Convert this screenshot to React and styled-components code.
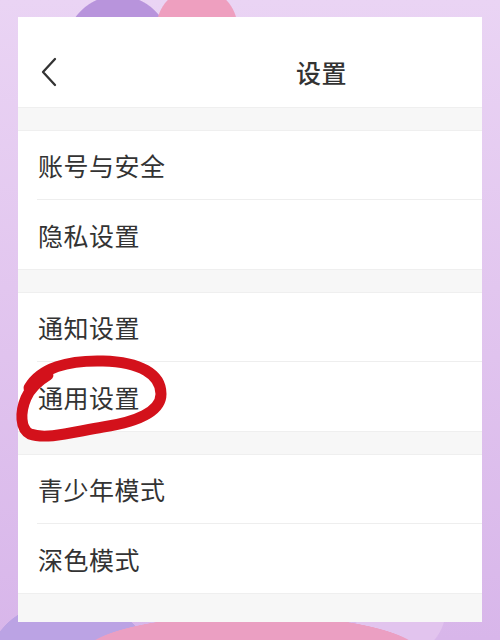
import React from 'react'
import styled, { createGlobalStyle } from 'styled-components'

const GlobalStyle = createGlobalStyle`
	html, body {
		margin: 0;
		padding: 0;
	}
	body {
		font-family: "Noto Sans CJK SC", "Noto Sans", sans-serif;
		background: #e9d2f2;
	}
`

const groups = [
	['账号与安全', '隐私设置'],
	['通知设置', '通用设置'],
	['青少年模式', '深色模式']
]

const App = () => (
	<Page>
		<GlobalStyle />
		<Card>
			<Header>
				<Back aria-label="返回">
					<svg width="18" height="30" viewBox="0 0 18 30">
						<path d="M15 2 L3 15 L15 28" fill="none" stroke="#333" strokeWidth="2.3" strokeLinecap="round" strokeLinejoin="round" />
					</svg>
				</Back>
				<Title>设置</Title>
			</Header>
			<Gap />
			{ groups.map((items, gi) => (
				<React.Fragment key={gi}>
					<Group>
						{ items.map((label, i) => (
							<Row key={label} last={i === items.length - 1}>
								<Label>{ label }</Label>
								{ label === '通用设置' && <Circle /> }
							</Row>
						))}
					</Group>
					<Gap last={gi === groups.length - 1} />
				</React.Fragment>
			))}
		</Card>
	</Page>
)

// hand-drawn red loop round the item
const Circle = () => (
	<Mark width="170" height="110" viewBox="0 0 170 110">
		<path
			d="M11 36 C 22 16, 50 8, 85 9 C 122 10, 143 22, 143 42 C 143 60, 118 70, 85 75 C 55 80, 28 88, 12 82 C 2 77, 2 60, 8 46 C 12 37, 20 29, 30 23"
			fill="none"
			stroke="#d3111b"
			strokeWidth="11"
			strokeLinecap="round"
			strokeLinejoin="round"
		/>
	</Mark>
)

const Page = styled.div`
	position: relative;
	width: 500px;
	height: 640px;
	overflow: hidden;
	padding: 17px 18px 0;
	box-sizing: border-box;
	background:
		radial-gradient(circle at 197px 28px, #ee9fbf 0 40px, transparent 41px),
		radial-gradient(circle at 118px 48px, #b894dc 0 52px, transparent 53px),
		radial-gradient(ellipse 170px 40px at 252px 655px, #eb9fc2 0 99%, transparent 100%),
		radial-gradient(circle at 400px 610px, #e2c4ee 0 45px, transparent 46px),
		radial-gradient(ellipse 80px 60px at 70px 660px, #bba3e4 0 99%, transparent 100%),
		linear-gradient(180deg, #ead4f4 0%, #e2c6ef 45%, #d8b6ea 100%);
`
const Card = styled.div`
	width: 464px;
	height: 605px;
	background: #fff;
	display: flex;
	flex-direction: column;
`
const Header = styled.div`
	height: 90px;
	display: flex;
	align-items: center;
	padding: 20px 0 0 22px;
	box-sizing: border-box;
`
const Back = styled.div`
	display: flex;
	align-items: center;
`
const Title = styled.div`
	margin-left: 238px;
	font-size: 25px;
	color: #333;
	font-weight: 500;
	letter-spacing: 0.5px;
`
const Gap = styled.div`
	height: ${p => (p.last ? '26px' : '24px')};
	background: #f7f7f7;
	border-top: 1px solid #efefef;
	border-bottom: ${p => (p.last ? 'none' : '1px solid #efefef')};
	box-sizing: border-box;
	flex: ${p => (p.last ? '1' : 'none')};
`
const Group = styled.div`
	display: flex;
	flex-direction: column;
`
const Row = styled.div`
	position: relative;
	height: 69px;
	margin-left: 19px;
	display: flex;
	align-items: center;
	border-bottom: ${p => (p.last ? 'none' : '1px solid #eeeeee')};
	box-sizing: border-box;
`
const Label = styled.span`
	font-size: 25px;
	color: #333;
	letter-spacing: 0.5px;
	padding-left: 1px;
`
const Mark = styled.svg`
	position: absolute;
	left: -19px;
	top: -10px;
	overflow: visible;
	pointer-events: none;
`

export default App
